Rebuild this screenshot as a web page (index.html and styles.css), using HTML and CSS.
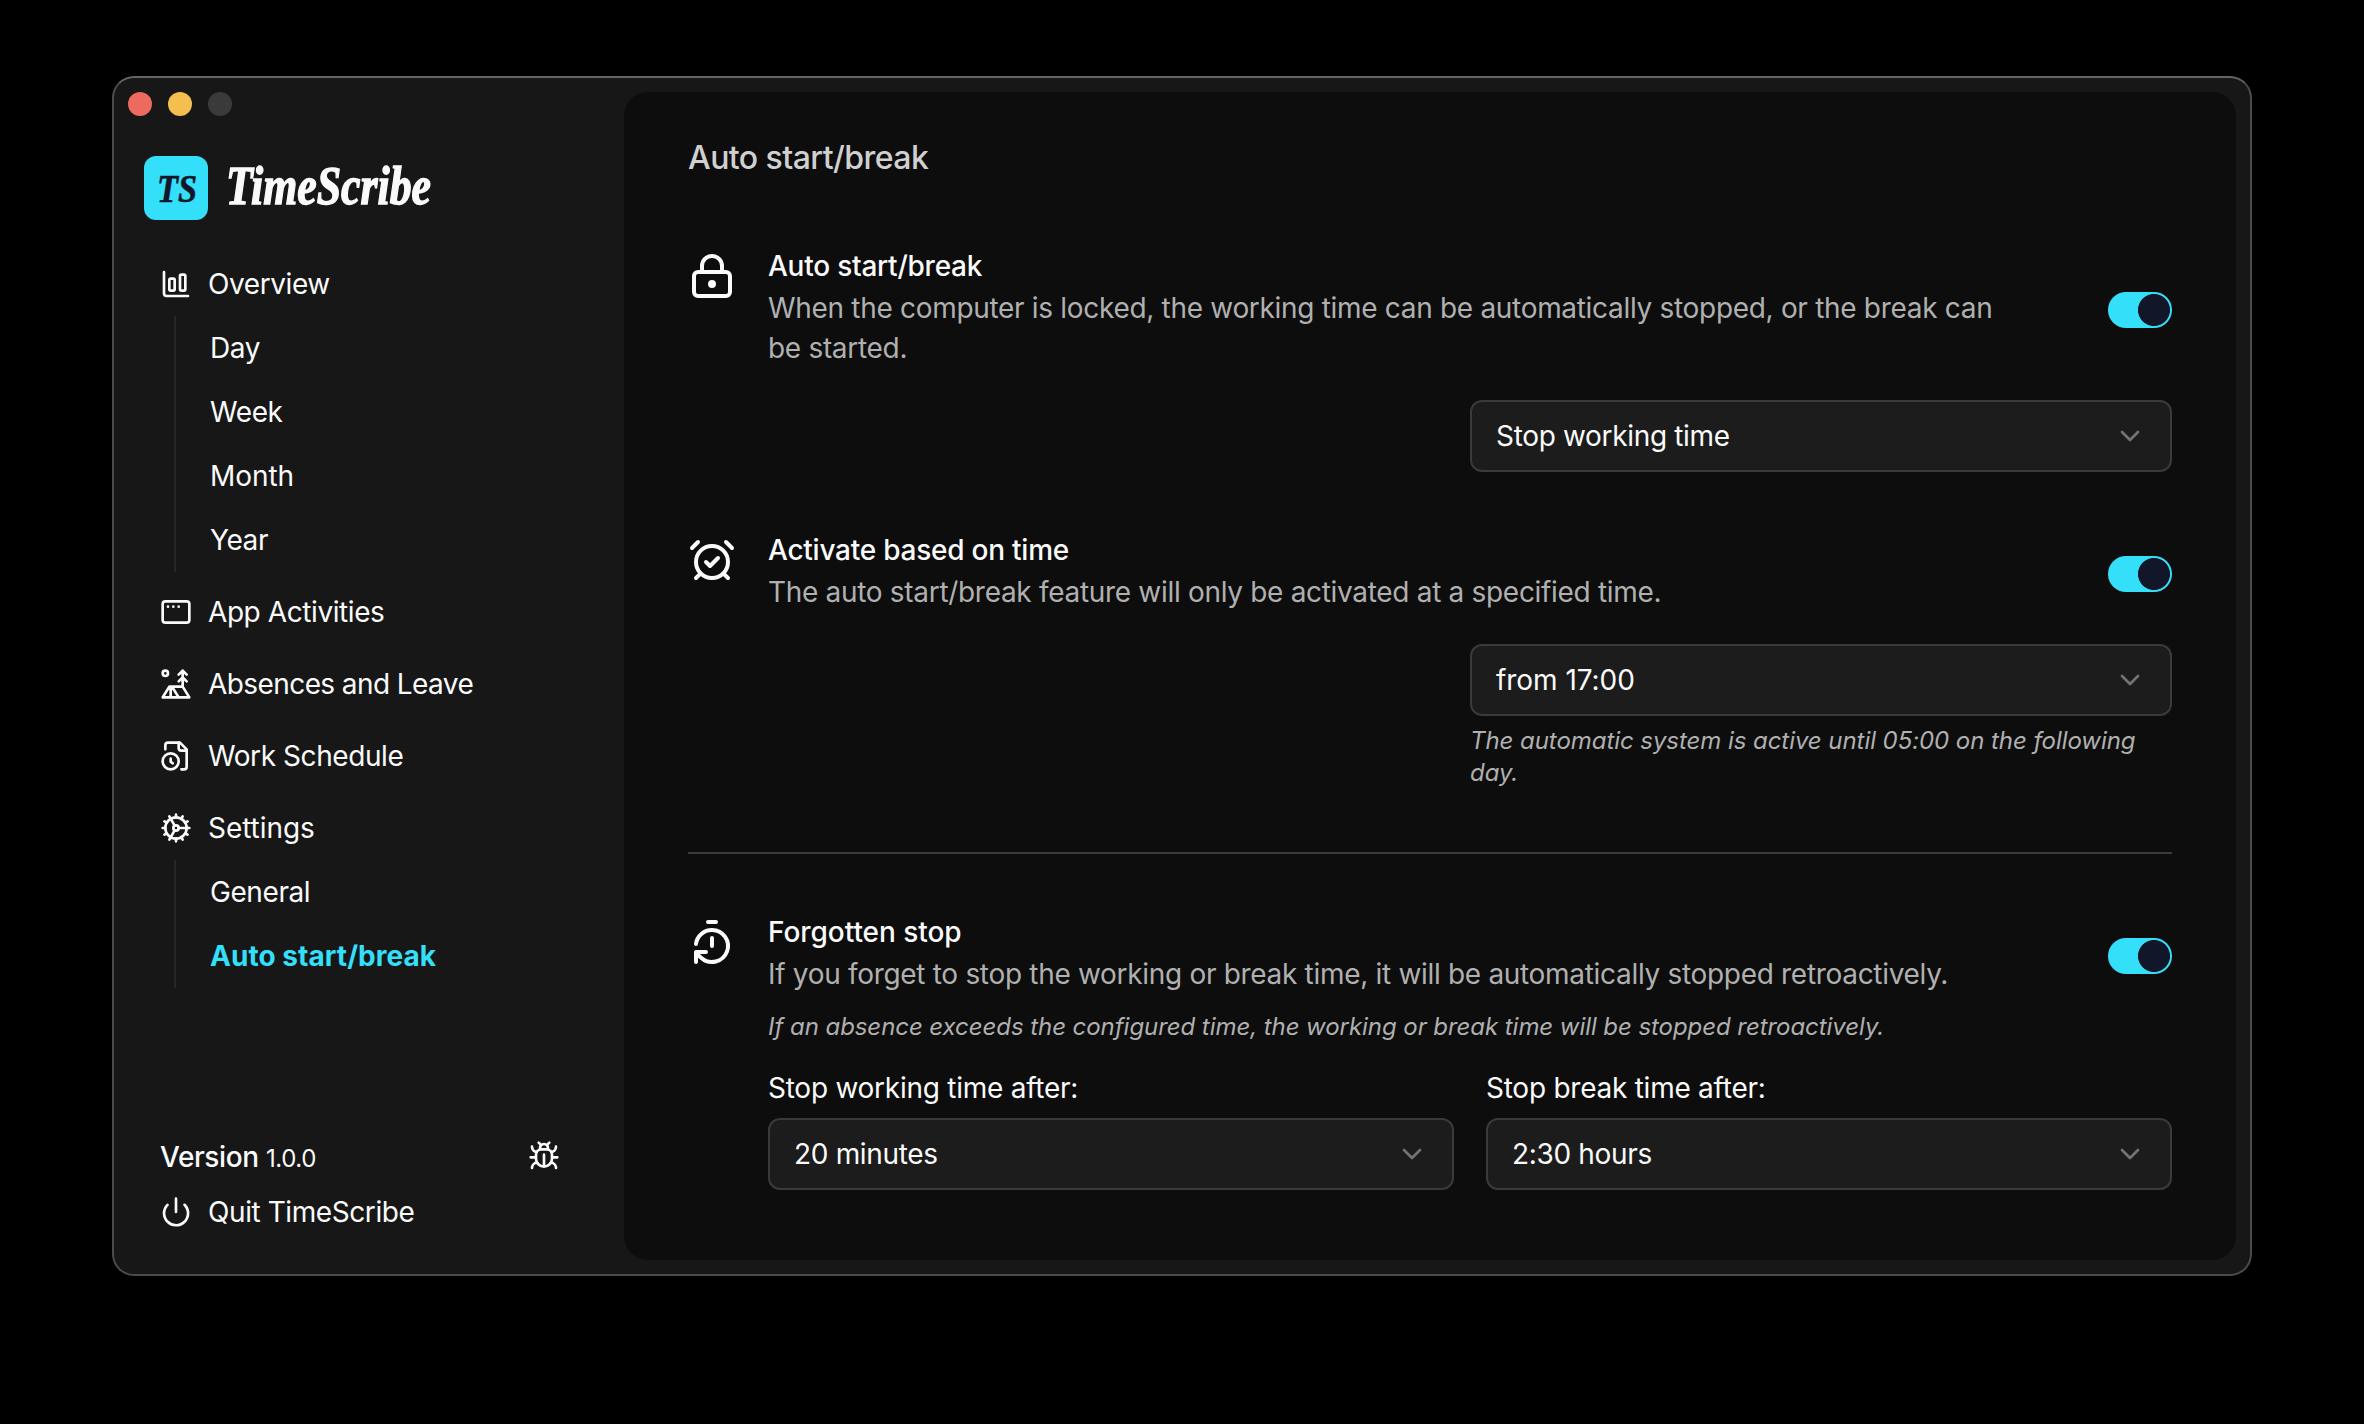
FILE: index.html
```html
<!DOCTYPE html>
<html lang="en">
<head>
<meta charset="utf-8">
<title>TimeScribe</title>
<link rel="stylesheet" href="styles.css">
</head>
<body>
<div class="window">
  <aside class="sidebar">
    <div class="lights"><i class="light close"></i><i class="light minimize"></i><i class="light"></i></div>
    <svg class="logo" viewBox="0 0 340 64" role="img" aria-label="TimeScribe">
      <rect class="logo-tile" width="64" height="64" rx="12"/>
      <text class="logo-mark" x="13" y="45.5" textLength="40" lengthAdjust="spacingAndGlyphs">TS</text>
      <text class="logo-name" x="82" y="48" textLength="205" lengthAdjust="spacingAndGlyphs">TimeScribe</text>
    </svg>
    <nav class="nav">
      <a class="item"><svg class="icon" viewBox="0 0 24 24"><path d="M3 3v16a2 2 0 0 0 2 2h16"/><rect x="15" y="5" width="4" height="12" rx="1"/><rect x="7" y="8" width="4" height="9" rx="1"/></svg>Overview</a>
      <div class="sub"><a>Day</a><a>Week</a><a class="even">Month</a><a>Year</a></div>
      <a class="item"><svg class="icon" viewBox="0 0 24 24"><rect width="20" height="16" x="2" y="4" rx="2"/><path d="M6 8h.01M10 8h.01M14 8h.01"/></svg>App Activities</a>
      <a class="item tight"><svg class="icon" viewBox="0 0 24 24"><circle cx="4" cy="4" r="2"/><path d="m14 5 3-3 3 3M14 10l3-3 3 3M17 14V2M17 14H7l-5 8h20ZM8 14v8M9 14l5 8"/></svg>Absences and Leave</a>
      <a class="item"><svg class="icon" viewBox="0 0 24 24"><path d="M16 22h2a2 2 0 0 0 2-2V7l-5-5H6a2 2 0 0 0-2 2v3"/><path d="M14 2v4a2 2 0 0 0 2 2h4"/><circle cx="8" cy="16" r="6"/><path d="M9.5 17.5 8 16.25V14"/></svg>Work Schedule</a>
      <a class="item even"><svg class="icon" viewBox="0 0 24 24"><circle cx="12" cy="12" r="8"/><circle cx="12" cy="12" r="2"/><path d="M12 2v2M12 22v-2M17 20.66l-1-1.73M11 10.27 7 3.34M20.66 17l-1.73-1M3.34 7l1.73 1M14 12h8M2 12h2M20.66 7l-1.73 1M3.34 17l1.73-1M17 3.34l-1 1.73M11 13.73l-4 6.93"/></svg>Settings</a>
      <div class="sub"><a>General</a><a class="active">Auto start/break</a></div>
    </nav>
    <footer class="foot">
      <div class="version"><span><b>Version</b> <small>1.0.0</small></span><svg class="icon" viewBox="0 0 24 24"><path d="m8 2 1.88 1.88M14.12 3.88 16 2M9 7.13v-1a3.003 3.003 0 1 1 6 0v1M12 20c-3.3 0-6-2.7-6-6v-3a4 4 0 0 1 4-4h4a4 4 0 0 1 4 4v3c0 3.3-2.7 6-6 6M12 20v-9M6.53 9C4.6 8.8 3 7.1 3 5M6 13H2M3 21c0-2.1 1.7-3.9 3.8-4M20.97 5c0 2.1-1.6 3.8-3.5 4M22 13h-4M17.2 17c2.1.1 3.8 1.9 3.8 4"/></svg></div>
      <a class="quit"><svg class="icon" viewBox="0 0 24 24"><path d="M12 2v10M18.4 6.6a9 9 0 1 1-12.77.04"/></svg>Quit TimeScribe</a>
    </footer>
  </aside>
  <main class="panel">
    <h1>Auto start/break</h1>
    <section>
      <div class="row">
        <svg class="icon big" viewBox="0 0 24 24"><circle cx="12" cy="16" r="1"/><rect x="3" y="10" width="18" height="12" rx="2"/><path d="M7 10V7a5 5 0 0 1 10 0v3"/></svg>
        <div class="text"><h2>Auto start/break</h2><p>When the computer is locked, the working time can be automatically stopped, or the break can be started.</p></div>
        <span class="toggle"></span>
      </div>
      <div class="right"><div class="select">Stop working time<svg class="icon" viewBox="0 0 24 24"><path d="m6 9 6 6 6-6"/></svg></div></div>
    </section>
    <section>
      <div class="row">
        <svg class="icon big" viewBox="0 0 24 24"><circle cx="12" cy="13" r="8"/><path d="M5 3 2 6M22 6l-3-3M6.38 18.7 4 21M17.64 18.67 20 21M9 13l2 2 4-4"/></svg>
        <div class="text"><h2>Activate based on time</h2><p>The auto start/break feature will only be activated at a specified time.</p></div>
        <span class="toggle"></span>
      </div>
      <div class="right"><div class="select even">from 17:00<svg class="icon" viewBox="0 0 24 24"><path d="m6 9 6 6 6-6"/></svg></div><p class="hint">The automatic system is active until 05:00 on the following day.</p></div>
    </section>
    <hr>
    <section>
      <div class="row">
        <svg class="icon big" viewBox="0 0 24 24"><path d="M10 2h4M12 14v-4M4 13a8 8 0 0 1 8-7 8 8 0 1 1-5.3 14L4 17.6M9 17H4v5"/></svg>
        <div class="text"><h2 class="even">Forgotten stop</h2><p>If you forget to stop the working or break time, it will be automatically stopped retroactively.</p></div>
        <span class="toggle"></span>
      </div>
      <div class="details">
        <p class="hint">If an absence exceeds the configured time, the working or break time will be stopped retroactively.</p>
        <div class="fields">
          <label>Stop working time after:<span class="select">20 minutes<svg class="icon" viewBox="0 0 24 24"><path d="m6 9 6 6 6-6"/></svg></span></label>
          <label>Stop break time after:<span class="select">2:30 hours<svg class="icon" viewBox="0 0 24 24"><path d="m6 9 6 6 6-6"/></svg></span></label>
        </div>
      </div>
    </section>
  </main>
</div>
</body>
</html>
```
FILE: styles.css
```css
* { box-sizing: border-box; margin: 0; }
body {
  height: 1424px;
  padding: 76px 112px 148px;
  background: #000;
  color: #fafafa;
  font: 28px/40px Inter, sans-serif;
  overflow: hidden;
}
.window {
  display: flex;
  height: 1200px;
  padding: 14px;
  border: 2px solid #4b4b4b;
  border-top-color: #646464;
  border-radius: 22px;
  background: #171717;
}
.sidebar { display: flex; flex-direction: column; width: 496px; padding-right: 64px; letter-spacing: -0.42px; }
.lights { display: flex; gap: 16px; height: 24px; }
.light { width: 24px; height: 24px; border-radius: 50%; background: #3a3a3a; }
.close { background: #ec6a5e; }
.minimize { background: #f4bf4f; }
.logo { width: 340px; height: 64px; margin: 40px 0 32px 16px; overflow: visible; letter-spacing: 0; }
.logo-tile { fill: #34dff9; }
.logo-mark, .logo-name { font-family: "Liberation Serif", serif; font-style: italic; font-weight: 700; }
.logo-mark { font-size: 41px; fill: #111729; stroke: #111729; stroke-width: 0.6; }
.logo-name { font-size: 54px; fill: #fafafa; stroke: #fafafa; stroke-width: 1.4; }
.nav { display: flex; flex-direction: column; gap: 8px; margin-left: 32px; }
.item { display: flex; align-items: center; gap: 16px; height: 64px; }
.sub { display: flex; flex-direction: column; margin: -8px 0 0 14px; padding-left: 34px; border-left: 2px solid #262626; }
.sub a { height: 64px; line-height: 64px; }
.sub .active { color: #34dff9; font-weight: 700; letter-spacing: 0.05px; }
.tight { letter-spacing: -0.58px; }
.even, .sub .even { letter-spacing: -0.05px; }
.icon {
  flex: none;
  width: 32px;
  height: 32px;
  fill: none;
  stroke: currentColor;
  stroke-width: 2;
  stroke-linecap: round;
  stroke-linejoin: round;
}
.big { width: 48px; height: 48px; }
.foot { display: flex; flex-direction: column; gap: 16px; margin: auto 0 28px 32px; }
.version { display: flex; justify-content: space-between; align-items: center; height: 40px; }
.version span { padding-top: 3px; }
.version b { font-weight: 500; }
.version small { font-size: 24px; }
.quit { display: flex; align-items: center; gap: 16px; height: 40px; }
.panel { flex: 1; padding: 46px 64px 0; border-radius: 24px; background: #0d0d0d; }
h1 { margin-bottom: 74px; color: #d0d0d0; font-size: 32px; font-weight: 500; line-height: 40px; letter-spacing: -0.56px; }
h2 { margin-bottom: 8px; font-size: 28px; font-weight: 500; line-height: 28px; letter-spacing: -0.24px; }
section + section { margin-top: 64px; }
.row { display: flex; align-items: flex-start; gap: 32px; }
.text { width: 1244px; color: #b0b0b0; letter-spacing: -0.31px; }
.text h2 { color: #fafafa; }
.toggle {
  align-self: center;
  width: 64px;
  height: 36px;
  margin-left: auto;
  border-radius: 18px;
  background: radial-gradient(circle at 46px 18px, #111729 15.6px, #34dff9 16.4px);
}
.right { width: 702px; margin: 32px 0 0 auto; }
.select {
  display: flex;
  justify-content: space-between;
  align-items: center;
  height: 72px;
  padding: 0 24px;
  border: 2px solid #3a3a3a;
  border-radius: 12px;
  background: #1c1c1c;
  line-height: 40px;
  letter-spacing: -0.33px;
}
.select.even { letter-spacing: -0.05px; }
.select .icon { color: #737373; }
.hint { margin-bottom: -1px; padding-top: 1px; color: #b0b0b0; font-size: 24px; font-style: italic; line-height: 32px; letter-spacing: -0.06px; }
.right .hint { margin-top: 8px; }
hr { height: 2px; margin: 64px 0; border: 0; background: #3a3a3a; }
.details { margin: 16px 0 0 80px; }
.fields { display: grid; grid-template-columns: 1fr 1fr; gap: 32px; margin-top: 32px; }
.fields label { display: flex; flex-direction: column; gap: 16px; line-height: 28px; letter-spacing: -0.25px; }
```
